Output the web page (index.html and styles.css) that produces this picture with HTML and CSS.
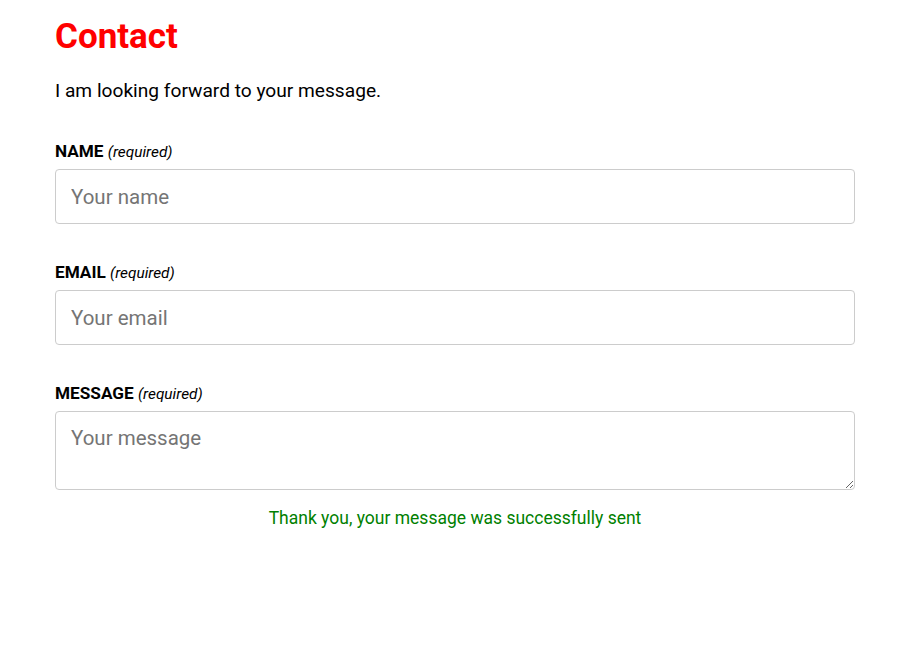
FILE: index.html
```html
<!DOCTYPE html>
<html lang="en">
<head>
<meta charset="utf-8">
<title>Contact</title>
<link rel="stylesheet" href="styles.css">
</head>
<body>
<main class="page">
  <h1 class="title">Contact</h1>
  <p class="intro">I am looking forward to your message.</p>
  <form class="form">
    <div class="field">
      <label class="label" for="name">NAME <em class="req">(required)</em></label>
      <input class="input" id="name" type="text" placeholder="Your name">
    </div>
    <div class="field">
      <label class="label" for="email">EMAIL <em class="req">(required)</em></label>
      <input class="input" id="email" type="email" placeholder="Your email">
    </div>
    <div class="field">
      <label class="label" for="message">MESSAGE <em class="req">(required)</em></label>
      <textarea class="input textarea" id="message" placeholder="Your message"></textarea>
    </div>
    <p class="success">Thank you, your message was successfully sent</p>
  </form>
</main>
</body>
</html>
```
FILE: styles.css
```css
* { box-sizing: border-box; }
html, body { margin: 0; padding: 0; background: #fff; }
body {
  font-family: Roboto, "Liberation Sans", Arial, sans-serif;
  color: #000;
}
.page {
  width: 800px;
  margin-left: 55px;
  padding-top: 15px;
}
.title {
  margin: 0;
  font-size: 35px;
  line-height: 44px;
  font-weight: 700;
  color: #ff0000;
}
.intro {
  margin: 20px 0 0;
  font-size: 19.15px;
  line-height: 24px;
}
.form {
  display: flex;
  flex-direction: column;
  gap: 38px;
  margin-top: 38px;
}
.field {
  display: flex;
  flex-direction: column;
  gap: 7px;
}
.label {
  font-size: 17.2px;
  line-height: 20px;
  font-weight: 700;
}
.req {
  font-size: 15.4px;
  font-weight: 400;
  font-style: italic;
}
.input {
  display: block;
  width: 100%;
  height: 55px;
  margin: 0;
  padding: 0 15px;
  border: 1px solid #cccccc;
  border-radius: 4px;
  font-family: Roboto, "Liberation Sans", Arial, sans-serif;
  font-size: 20.5px;
  color: #000;
  background: #fff;
  outline: none;
}
.input::placeholder { color: #757575; }
.textarea {
  height: 79px;
  padding: 14px 15px;
  line-height: 24px;
  resize: vertical;
}
.success {
  margin: -20px 0 0;
  text-align: center;
  font-size: 17.5px;
  line-height: 20px;
  color: #008000;
}
```
